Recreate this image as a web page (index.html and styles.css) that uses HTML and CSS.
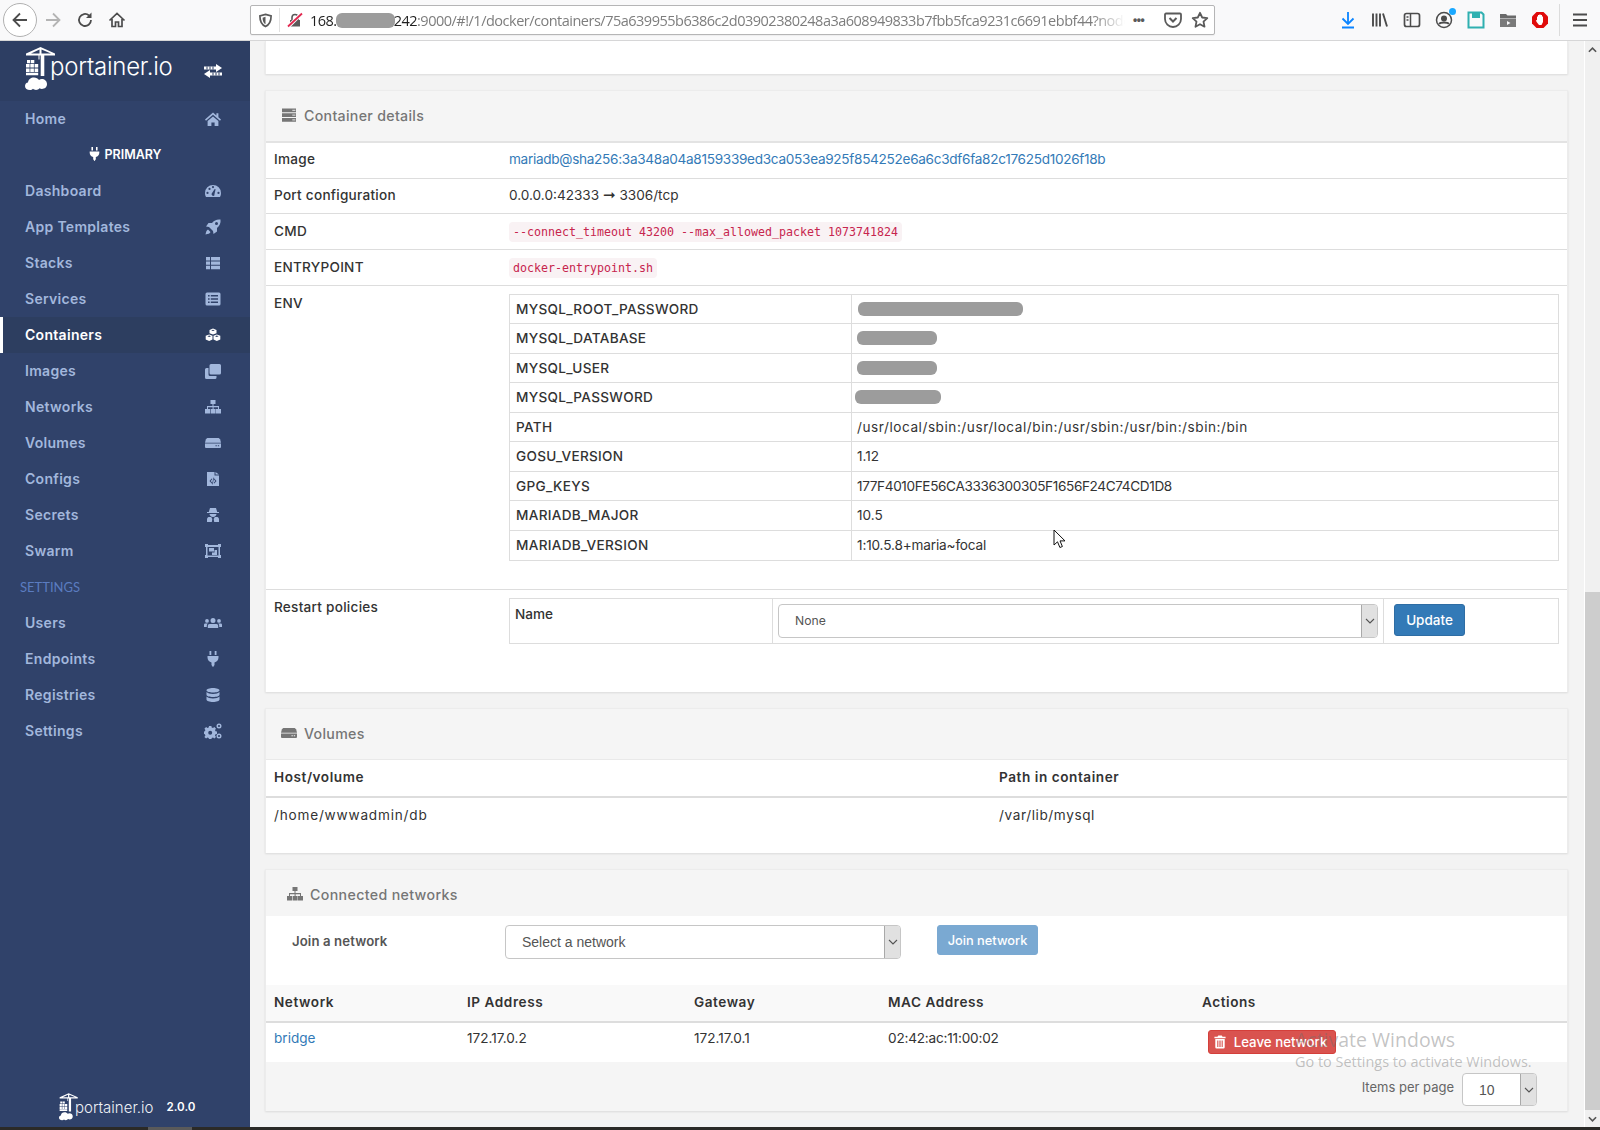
FILE: index.html
```html
<!DOCTYPE html>
<html lang="en">
<head>
<meta charset="utf-8">
<title>Container details - Portainer</title>
<link rel="stylesheet" href="styles.css">
</head>
<body>
<svg class="defs" width="0" height="0" aria-hidden="true">
  <symbol id="i-home" viewBox="0 0 16 16"><path d="M8 1.6 0 8.6l1 1.2 7-6 7 6 1-1.2-2.600-2.300V2.200h-2v2.300zM2.600 10v5h3.800v-3.400h3.200V15h3.800v-5L8 5.400z"/></symbol>
  <symbol id="i-dash" viewBox="0 0 16 16"><path d="M8 2a8 8 0 0 0-8 8c0 1.600.4 3 1.100 4h13.800c.7-1 1.100-2.400 1.100-4a8 8 0 0 0-8-8zM2.500 11a1.100 1.100 0 1 1 0-2.200 1.100 1.100 0 0 1 0 2.200zm2-4a1.100 1.100 0 1 1 0-2.200 1.100 1.100 0 0 1 0 2.200zM8 5.200A1.100 1.100 0 1 1 8 3a1.100 1.100 0 0 1 0 2.200zm1.300 7.300a1.700 1.700 0 0 1-2.600-2l3-4.600.9.300-1.200 5.300c.2.300.1.700-.1 1zM13.500 11a1.100 1.100 0 1 1 0-2.200 1.100 1.100 0 0 1 0 2.200z"/></symbol>
  <symbol id="i-rocket" viewBox="0 0 16 16"><path d="M15.500.5c-3.500-.5-6.500.8-8.500 3.500H3.500L1 7.500l3 .5 4 4 .5 3 3.500-2.500V9c2.700-2 4-5 3.500-8.500zM11.500 6a1.500 1.500 0 1 1 0-3 1.500 1.500 0 0 1 0 3zM3 10.500c-1.500.5-2 2.500-2.500 5 2.500-.5 4.500-1 5-2.500z"/></symbol>
  <symbol id="i-stacks" viewBox="0 0 16 16"><path d="M1 2h4v3.400H1zm5 0h9v3.400H6zM1 6.400h4v3.400H1zm5 0h9v3.400H6zM1 10.800h4v3.400H1zm5 0h9v3.400H6z"/></symbol>
  <symbol id="i-services" viewBox="0 0 16 16"><path fill-rule="evenodd" d="M2 1.500h12a1.500 1.500 0 0 1 1.500 1.500v10a1.500 1.500 0 0 1-1.500 1.500H2A1.500 1.500 0 0 1 .5 13V3A1.500 1.500 0 0 1 2 1.500zM3 4v1.500h1.600V4zm2.800 0v1.500H13V4zM3 7.200v1.500h1.600V7.200zm2.800 0v1.500H13V7.200zM3 10.500V12h1.600v-1.500zm2.800 0V12H13v-1.500z"/></symbol>
  <symbol id="i-cubes" viewBox="0 0 16 16"><path fill-rule="evenodd" d="M8 1.600l3.500 1.300v3.400L8 7.600 4.500 6.300V2.900zM6.200 3.400 8 4.100l1.800-.7L8 2.700zM4.200 7.500l3.300 1.300v3.800L4.200 14 .7 12.600V8.800zM2.400 9.300l1.800.7 1.800-.7-1.800-.7zM11.800 7.500l3.500 1.300v3.800L11.800 14l-3.300-1.400V8.800zM10 9.300l1.800.7 1.800-.7-1.800-.7z"/></symbol>
  <symbol id="i-images" viewBox="0 0 16 16"><path d="M6 1h8.500A1.500 1.500 0 0 1 16 2.500V10a1.500 1.500 0 0 1-1.500 1.500H6A1.500 1.500 0 0 1 4.500 10V2.500A1.500 1.500 0 0 1 6 1zM1.500 5h2v6.500A1.500 1.500 0 0 0 5 13h6.500v1.500A1.500 1.500 0 0 1 10 16H1.500A1.500 1.500 0 0 1 0 14.500v-8A1.500 1.500 0 0 1 1.500 5z"/></symbol>
  <symbol id="i-sitemap" viewBox="0 0 18 16"><path d="M6.500 1h5v4h-2v2H15v3h2v4.500h-5V10h2V8.300H9.600V10h2v4.500h-5V10h2V8.300H4V10h2v4.500H1V10h2V7h5.500V5h-2z"/></symbol>
  <symbol id="i-hdd" viewBox="0 0 16 16"><path d="M3 3h10c1 0 1.700.6 2.200 1.500L16 7.800H0l.8-3.300C1.300 3.600 2 3 3 3z"/><path fill-rule="evenodd" d="M0 8.600h16V12a1 1 0 0 1-1 1H1a1 1 0 0 1-1-1zM10.500 10.200v1.100h1.300v-1.100zm2.300 0v1.100h1.300v-1.100z"/></symbol>
  <symbol id="i-file" viewBox="0 0 12 16"><path fill-rule="evenodd" d="M0 1h7.500v3.500H12V15H0zM8.500 1 12 3.500H8.500zM4.700 7.500 2.500 10l2.200 2.500.7-.6L3.700 10l1.700-1.900zM7.300 7.500l-.7.600L8.300 10l-1.700 1.900.7.600L9.500 10zM6.500 6.500 5 13.300l.6.200 1.500-6.800z"/></symbol>
  <symbol id="i-secret" viewBox="0 0 14 16"><path d="M4 1h6l1.200 4H13v1H1V5h1.800zM3.500 7h7c0 1.500-1.500 3-3.500 3S3.500 8.500 3.500 7zM2.500 10h2.700L6.300 12l-.5 3H1v-2.500c0-1 .5-2 1.500-2.500zM8.800 10h2.700c1 .5 1.500 1.500 1.500 2.500V15H8.200l-.5-3z"/></symbol>
  <symbol id="i-swarm" viewBox="0 0 16 16"><path fill-rule="evenodd" d="M0 1h3v1h10V1h3v3h-1v8h1v3h-3v-1H3v1H0v-3h1V4H0zM2.500 4v8.500h11V4zM4 5h5v3.500H4zM7 9.500h2.500V7H12v5H7z"/></symbol>
  <symbol id="i-users" viewBox="0 0 18 16"><path d="M9 3a2.500 2.500 0 1 1 0 5 2.500 2.500 0 0 1 0-5zM3 4a1.900 1.900 0 1 1 0 3.800A1.900 1.900 0 0 1 3 4zm12 0a1.900 1.900 0 1 1 0 3.800A1.900 1.900 0 0 1 15 4zM5.500 9h7a1.700 1.700 0 0 1 1.700 1.700V13H3.800v-2.300A1.700 1.700 0 0 1 5.500 9zM1.200 8.500h2.600a2.600 2.600 0 0 0-1 2V12H0V9.700a1.200 1.200 0 0 1 1.200-1.200zM14.200 8.500h2.600A1.200 1.200 0 0 1 18 9.700V12h-2.800v-1.500a2.600 2.600 0 0 0-1-2z"/></symbol>
  <symbol id="i-plug" viewBox="0 0 12 16"><path d="M2.500 0h1.800v4H2.500zm5.200 0h1.800v4H7.700zM.5 5h11v1.500c0 2.500-1.700 4.400-4 4.900V14L6 16.200 4.500 14v-2.600c-2.300-.5-4-2.400-4-4.900z"/></symbol>
  <symbol id="i-db" viewBox="0 0 14 16"><path d="M7 1c3.500 0 6.500 1 6.500 2.300S10.500 5.600 7 5.600.5 4.600.5 3.300 3.500 1 7 1zM.5 5c1 1.300 3.600 1.900 6.500 1.900S12.500 6.300 13.500 5v2.700C13.500 9 10.500 10 7 10S.5 9 .5 7.700zM.5 9.500c1 1.300 3.600 1.900 6.500 1.900s5.500-.6 6.500-1.900v3C13.500 13.900 10.500 15 7 15S.5 13.900.5 12.500z"/></symbol>
  <symbol id="i-cogs" viewBox="0 0 18 16"><path fill-rule="evenodd" d="M5 3h2.400l.3 1.400 1.300.6L10.300 4 12 5.700l-1 1.300.5 1.300 1.500.3v2.400l-1.500.3-.5 1.300 1 1.300-1.700 1.700-1.300-1-1.300.5-.3 1.400H5l-.3-1.400-1.300-.5-1.300 1L.4 13.900l1-1.300-.5-1.300L0 11V8.600l.9-.3.5-1.300-1-1.300L2.100 4l1.300 1 1.300-.6zM6.200 7.800a2 2 0 1 0 0 4 2 2 0 0 0 0-4z"/><path fill-rule="evenodd" d="M15 .5a2.500 2.500 0 1 1 0 5 2.500 2.500 0 0 1 0-5zm0 1.400a1.100 1.100 0 1 0 0 2.200 1.100 1.100 0 0 0 0-2.200zM15 10.500a2.500 2.500 0 1 1 0 5 2.500 2.500 0 0 1 0-5zm0 1.400a1.100 1.100 0 1 0 0 2.200 1.100 1.100 0 0 0 0-2.200z"/></symbol>
  <symbol id="i-server" viewBox="0 0 16 16"><path fill-rule="evenodd" d="M1 1.500h14v3.800H1zM1 6.200h14V10H1zM1 11h14v3.800H1zM11.500 2.800v1.200h1.200V2.800zm1.800 0V4h1V2.800zM11.500 7.500v1.200h1.200V7.500zm1.800 0v1.200h1V7.500zM11.500 12.300v1.200h1.200v-1.200zm1.800 0v1.200h1v-1.200z"/></symbol>
  <symbol id="i-trash" viewBox="0 0 14 16"><path fill-rule="evenodd" d="M5 .5h4l1 1.500h3.500v1.600H.5V2H4zM1.500 4.500h11V14a1.500 1.500 0 0 1-1.500 1.500H3A1.500 1.500 0 0 1 1.500 14zM3.800 6.300v7.400h1.300V6.300zm2.500 0v7.400h1.400V6.300zm2.600 0v7.400h1.300V6.300z"/></symbol>
  <symbol id="i-logo" viewBox="0 0 32 44">
    <path d="M15.500 0 30 6.500v2H14.500V12.500h-1V8.500H1V6.500zM14.500 6.500V2.500L6 6.500zM16.500 6.500H26L16.500 2.500zM15.700 8.500h3.600V29h-3.600z"/>
    <path d="M2 13h3.300v3.300H2zm4 0h3.300v3.300H6zM1 17h3.600v3.600H1zm4.300 0h3.600v3.600H5.300zm4.300 0h3.600v3.600H9.600zM1 21.400h3.600V25H1zm4.300 0h3.600V25H5.300zm4.300 0h3.600V25H9.600zM1 25.700h12.200v2.500H1z"/>
    <path d="M5 43c-3 0-5-1.600-5-4 0-1.900 1.400-3.300 3-3.500C3.300 32.500 5.800 30.500 9 30.500c2.200 0 4 1 5 2.400.8-.5 1.700-.8 2.700-.8 2.800 0 5.300 2 5.300 5 0 3.200-2.400 4.900-5 4.900-1 0-1.800-.3-2.500-.7-.8 1-2 1.700-3.500 1.700-1.300 0-2.400-.5-3-1.200-.7.800-1.700 1.200-3 1.200z"/>
  </symbol>
  <symbol id="i-chev" viewBox="0 0 10 6"><path d="M1 1l4 4 4-4" fill="none" stroke="currentColor" stroke-width="1.100"/></symbol>
</svg>

<header class="toolbar">
  <div class="nav-group">
    <span class="back-btn"><svg class="tb-icon" viewBox="0 0 18 18"><path d="M16 9H3M9 2.500 2.500 9 9 15.500" fill="none" stroke="#4c4c4c" stroke-width="1.800"/></svg></span>
    <span class="nav-btn"><svg class="tb-icon" viewBox="0 0 18 18"><path d="M2 9h13M9 2.500 15.500 9 9 15.500" fill="none" stroke="#b4b4b4" stroke-width="1.800"/></svg></span>
    <span class="nav-btn"><svg class="tb-icon" viewBox="0 0 18 18"><path d="M15 9a6 6 0 1 1-2-4.500" fill="none" stroke="#4c4c4c" stroke-width="1.800"/><path d="M15.500 1.500v5.500H10z" fill="#4c4c4c"/></svg></span>
    <span class="nav-btn"><svg class="tb-icon" viewBox="0 0 18 18"><path d="M1.500 9.500 9 2.500l7.500 7M4 8v7.500h3.500V11h3v4.500H14V8" fill="none" stroke="#4c4c4c" stroke-width="1.700"/></svg></span>
  </div>
  <div class="urlbar">
    <svg class="shield" viewBox="0 0 16 16"><path d="M8 1.500 14 3c0 6-1.500 9.500-6 11.500C3.500 12.500 2 9 2 3z" fill="none" stroke="#5a5a5a" stroke-width="1.800"/><path d="M8 4v8c-2.300-1.300-3-3.500-3.100-7z" fill="#5a5a5a"/></svg>
    <span class="url-sep"></span>
    <svg class="lock" viewBox="0 0 16 16"><path d="M3 8h10v6.500H3z" fill="#5a5a5a"/><path d="M5 8V5.500a3 3 0 0 1 6 0V8" fill="none" stroke="#5a5a5a" stroke-width="1.600"/><path d="M1 15 15 1" stroke="#fff" stroke-width="3.500"/><path d="M1 14.500 15 1.500" stroke="#e22850" stroke-width="1.800"/></svg>
    <span class="url-text"><span class="url-host">168.</span><span class="url-blob"></span><span class="url-host">242</span>:9000/#!/1/docker/containers/75a639955b6386c2d03902380248a3a608949833b7fbb5fca9231c6691ebbf44?node</span>
    <span class="url-dots">•••</span>
    <svg class="tb-icon url-action" viewBox="0 0 18 18"><path d="M2 2.500h14a1 1 0 0 1 1 1V8a8 8 0 0 1-16 0V3.500a1 1 0 0 1 1-1z" fill="none" stroke="#5a5a5a" stroke-width="1.800"/><path d="M5.500 7 9 10.500 12.500 7" fill="none" stroke="#5a5a5a" stroke-width="2"/></svg>
    <svg class="tb-icon url-action" viewBox="0 0 18 18"><path d="m9 1.800 2.200 4.700 5.100.6-3.800 3.500 1 5.100L9 13.200l-4.500 2.500 1-5.100-3.800-3.500 5.100-.6z" fill="none" stroke="#5a5a5a" stroke-width="1.800" stroke-linejoin="round"/></svg>
  </div>
  <div class="tool-group">
    <svg class="tb-icon" viewBox="0 0 18 18"><path d="M9 1v11M3.500 7.500 9 13l5.500-5.500M3 16.500h12" fill="none" stroke="#0a84ff" stroke-width="1.800"/></svg>
    <svg class="tb-icon" viewBox="0 0 18 18"><path d="M2 2.500v13M5.500 2.500v13M9 2.500v13M12 2.500l4 13" fill="none" stroke="#4c4c4c" stroke-width="1.900"/></svg>
    <svg class="tb-icon" viewBox="0 0 18 18"><rect x="1.500" y="2.500" width="15" height="13" rx="2" fill="none" stroke="#4c4c4c" stroke-width="1.700"/><path d="M7.500 2.500v13M3.500 6h2M3.500 9h2" stroke="#4c4c4c" stroke-width="1.500"/></svg>
    <span class="acct"><svg class="tb-icon" viewBox="0 0 18 18"><circle cx="9" cy="9" r="7.500" fill="none" stroke="#4c4c4c" stroke-width="1.500"/><circle cx="9" cy="7.500" r="3" fill="#4c4c4c"/><path d="M4 13c1.500-2 8.500-2 10 0" fill="none" stroke="#4c4c4c" stroke-width="1.800"/></svg><span class="acct-dot"></span></span>
    <svg class="tb-icon" viewBox="0 0 18 18"><path d="M1.500 1.500h13l2 2v13h-15z" fill="none" stroke="#2fb0b0" stroke-width="2"/><path d="M5 1.500h8V7H5z" fill="#2fb0b0"/></svg>
    <svg class="tb-icon" viewBox="0 0 18 18"><path d="M1 3h6l1.500 1.500H17v3H1z" fill="#6a6a6a"/><path d="M1 8h16v8H1z" fill="#7a7a7a"/><path d="M8 10v4l3.500-2z" fill="#f9f9fa"/></svg>
    <svg class="tb-icon" viewBox="0 0 18 18"><path d="M5.500 1h7L17 5.500v7L12.500 17h-7L1 12.500v-7z" fill="#e00b0b"/><path d="M6 9V5.500h1V4h1.200v-.5h1.500V4H11v1.500h1V11l-1.500 3H8L6 11.500 4.800 9.500z" fill="#fff"/></svg>
    <span class="tool-sep"></span>
    <svg class="tb-icon" viewBox="0 0 18 18"><path d="M2 3.500h14M2 9h14M2 14.500h14" stroke="#4c4c4c" stroke-width="1.800"/></svg>
  </div>
</header>

<div class="app">
  <aside class="sidebar">
    <div class="brand">
      <span class="brand-logo">
        <svg class="logo-mark"><use href="#i-logo"/></svg>
        <span class="logo-word">portainer.io</span>
      </span>
      <svg class="switch-icon" viewBox="0 0 18 16"><path d="M0 3.500h12V1l6 4-6 4V6.500H0z" fill="#fff"/><path d="M18 9.500H6V7L0 11l6 4v-2.500h12z" fill="#fff"/><path d="M3 3.500v3M6 3.500v3M9 3.500v3M9 9.500v3M12 9.500v3M15 9.500v3" stroke="#2d3e63"/></svg>
    </div>
    <nav class="side-nav">
      <a class="nav-row"><span>Home</span><svg class="nav-ico"><use href="#i-home"/></svg></a>
      <div class="env-row"><svg class="env-ico"><use href="#i-plug"/></svg>PRIMARY</div>
      <a class="nav-row"><span>Dashboard</span><svg class="nav-ico"><use href="#i-dash"/></svg></a>
      <a class="nav-row"><span>App Templates</span><svg class="nav-ico"><use href="#i-rocket"/></svg></a>
      <a class="nav-row"><span>Stacks</span><svg class="nav-ico"><use href="#i-stacks"/></svg></a>
      <a class="nav-row"><span>Services</span><svg class="nav-ico"><use href="#i-services"/></svg></a>
      <a class="nav-row active"><span>Containers</span><svg class="nav-ico"><use href="#i-cubes"/></svg></a>
      <a class="nav-row"><span>Images</span><svg class="nav-ico"><use href="#i-images"/></svg></a>
      <a class="nav-row"><span>Networks</span><svg class="nav-ico"><use href="#i-sitemap"/></svg></a>
      <a class="nav-row"><span>Volumes</span><svg class="nav-ico"><use href="#i-hdd"/></svg></a>
      <a class="nav-row"><span>Configs</span><svg class="nav-ico"><use href="#i-file"/></svg></a>
      <a class="nav-row"><span>Secrets</span><svg class="nav-ico"><use href="#i-secret"/></svg></a>
      <a class="nav-row"><span>Swarm</span><svg class="nav-ico"><use href="#i-swarm"/></svg></a>
      <div class="nav-title">SETTINGS</div>
      <a class="nav-row"><span>Users</span><svg class="nav-ico"><use href="#i-users"/></svg></a>
      <a class="nav-row"><span>Endpoints</span><svg class="nav-ico"><use href="#i-plug"/></svg></a>
      <a class="nav-row"><span>Registries</span><svg class="nav-ico"><use href="#i-db"/></svg></a>
      <a class="nav-row"><span>Settings</span><svg class="nav-ico"><use href="#i-cogs"/></svg></a>
    </nav>
    <div class="side-foot">
      <svg class="foot-mark"><use href="#i-logo"/></svg>
      <span class="foot-word">portainer.io</span>
      <span class="foot-ver">2.0.0</span>
    </div>
  </aside>

  <main class="main">
    <section class="widget stub"></section>

    <section class="widget details">
      <h3 class="widget-head"><svg class="head-ico"><use href="#i-server"/></svg>Container details</h3>
      <table class="kv">
        <tr><td class="k">Image</td><td><a class="link hash">mariadb@sha256:3a348a04a8159339ed3ca053ea925f854252e6a6c3df6fa82c17625d1026f18b</a></td></tr>
        <tr><td class="k">Port configuration</td><td>0.0.0.0:42333 <span class="arrow">➞</span> 3306/tcp</td></tr>
        <tr><td class="k">CMD</td><td><code>--connect_timeout 43200 --max_allowed_packet 1073741824</code></td></tr>
        <tr><td class="k">ENTRYPOINT</td><td><code>docker-entrypoint.sh</code></td></tr>
        <tr class="env-tr"><td class="k">ENV</td><td>
          <table class="env">
            <tr><td class="ek">MYSQL_ROOT_PASSWORD</td><td><span class="blob b-root"></span></td></tr>
            <tr><td class="ek">MYSQL_DATABASE</td><td><span class="blob b-db"></span></td></tr>
            <tr><td class="ek">MYSQL_USER</td><td><span class="blob b-db"></span></td></tr>
            <tr><td class="ek">MYSQL_PASSWORD</td><td><span class="blob b-pw"></span></td></tr>
            <tr><td class="ek">PATH</td><td class="v-path">/usr/local/sbin:/usr/local/bin:/usr/sbin:/usr/bin:/sbin:/bin</td></tr>
            <tr><td class="ek">GOSU_VERSION</td><td>1.12</td></tr>
            <tr><td class="ek">GPG_KEYS</td><td class="v-hex">177F4010FE56CA3336300305F1656F24C74CD1D8</td></tr>
            <tr><td class="ek">MARIADB_MAJOR</td><td>10.5</td></tr>
            <tr><td class="ek">MARIADB_VERSION</td><td class="v-ver">1:10.5.8+maria~focal</td></tr>
          </table>
        </td></tr>
        <tr class="restart-tr"><td class="k">Restart policies</td><td>
          <table class="restart">
            <tr>
              <td class="rn">Name</td>
              <td class="rs"><div class="select sel-none"><span>None</span><span class="sel-arrow"><svg class="chev"><use href="#i-chev"/></svg></span></div></td>
              <td class="ru"><button class="btn btn-primary">Update</button></td>
            </tr>
          </table>
        </td></tr>
      </table>
    </section>

    <section class="widget vols">
      <h3 class="widget-head"><svg class="head-ico"><use href="#i-hdd"/></svg>Volumes</h3>
      <table class="vt">
        <thead><tr><th>Host/volume</th><th>Path in container</th></tr></thead>
        <tbody><tr><td class="v-host">/home/wwwadmin/db</td><td class="v-mount">/var/lib/mysql</td></tr></tbody>
      </table>
    </section>

    <section class="widget nets">
      <h3 class="widget-head net-head"><svg class="head-ico"><use href="#i-sitemap"/></svg>Connected networks</h3>
      <div class="join">
        <label class="join-label">Join a network</label>
        <div class="select sel-net"><span>Select a network</span><span class="sel-arrow"><svg class="chev"><use href="#i-chev"/></svg></span></div>
        <button class="btn btn-join">Join network</button>
      </div>
      <table class="nt">
        <thead><tr><th>Network</th><th>IP Address</th><th>Gateway</th><th>MAC Address</th><th>Actions</th></tr></thead>
        <tbody><tr><td><a class="link">bridge</a></td><td>172.17.0.2</td><td>172.17.0.1</td><td class="v-mac">02:42:ac:11:00:02</td><td><button class="btn btn-danger"><svg class="trash"><use href="#i-trash"/></svg>Leave network</button></td></tr></tbody>
      </table>
      <div class="pager">
        <span class="pager-label">Items per page</span>
        <div class="select sel-page"><span>10</span><span class="sel-arrow"><svg class="chev"><use href="#i-chev"/></svg></span></div>
      </div>
    </section>

    <svg class="cursor" viewBox="0 0 13 21"><path d="M1 1v15l3.500-3.200 2.400 5.700 2.500-1-2.400-5.600H12z" fill="#fff" stroke="#111" stroke-width="1"/></svg>
    <div class="watermark">
      <div class="wm-title">Activate Windows</div>
      <div class="wm-sub">Go to Settings to activate Windows.</div>
    </div>
  </main>

  <div class="scrollbar">
    <span class="sb-btn"><svg class="sb-chev" viewBox="0 0 10 6"><path d="M1 5l4-4 4 4" fill="none" stroke="#555" stroke-width="1.800"/></svg></span>
    <span class="sb-track"></span>
    <span class="sb-thumb"></span>
    <span class="sb-btn"><svg class="sb-chev" viewBox="0 0 10 6"><path d="M1 1l4 4 4-4" fill="none" stroke="#555" stroke-width="1.800"/></svg></span>
  </div>
</div>

<footer class="taskbar"><span class="tb-a"></span><span class="tb-b"></span><span class="tb-c"></span></footer>
</body>
</html>
```
FILE: styles.css
```css
* { box-sizing: border-box; }
html, body { margin: 0; height: 1130px; overflow: hidden; }
body { font-family: Inter, "Noto Sans", sans-serif; font-size: 13.6px; color: #333; display: flex; flex-direction: column; background: #f3f3f3; }
.defs { position: absolute; }
svg { display: block; flex: none; }
button { font-family: inherit; }

/* Browser chrome */
.toolbar { height: 41px; flex: none; display: flex; align-items: center; background: #f9f9fa; border-bottom: 1px solid #d6d6d7; padding-left: 3px; }
.nav-group { display: flex; align-items: center; width: 247px; }
.back-btn { width: 34px; height: 34px; border: 1px solid #b1b1b1; border-radius: 50%; background: #fff; display: flex; align-items: center; justify-content: center; }
.nav-btn { width: 32px; display: flex; justify-content: center; }
.tb-icon { width: 18px; height: 18px; }
.urlbar { width: 965px; height: 30px; background: #fff; border: 1px solid #b5b5b6; border-radius: 2px; display: flex; align-items: center; padding-left: 7px; box-shadow: 0 1px 1px rgba(0,0,0,.05); }
.shield { width: 15px; height: 15px; }
.url-sep { width: 1px; height: 24px; background: #e2e2e2; margin: 0 7px 0 6px; }
.lock { width: 16px; height: 16px; }
.url-text { font-family: "Open Sans", sans-serif; font-size: 14.5px; letter-spacing: -.5px; color: #7d7d7d; margin-left: 7px; width: 815px; white-space: nowrap; overflow: hidden; display: flex; align-items: center; -webkit-mask-image: linear-gradient(90deg, #000 96%, transparent); mask-image: linear-gradient(90deg, #000 96%, transparent); }
.url-host { color: #1f1f1f; }
.url-blob { width: 59px; height: 15px; background: #9c9c9c; border-radius: 6px; flex: none; margin: 0 -1px; }
.url-dots { font-size: 12px; font-weight: 700; color: #5a5a5a; width: 22px; margin-left: 8px; font-family: "Liberation Sans", sans-serif; white-space: nowrap; letter-spacing: -.5px; }
.url-action { margin-left: 9px; }
.tool-group { display: flex; align-items: center; gap: 14px; margin-left: 124px; }
.acct { position: relative; }
.acct-dot { position: absolute; right: -3px; top: -3px; width: 7px; height: 7px; border-radius: 50%; background: #19a8ff; }
.tool-sep { width: 1px; height: 32px; background: #dcdcdc; margin: 0 -3px 0 -4px; }

/* App shell */
.app { flex: 1; min-height: 0; display: flex; }
.sidebar { width: 250px; flex: none; background: #30426a; display: flex; flex-direction: column; }
.brand { height: 60px; background: #2d3e63; display: flex; align-items: flex-start; padding: 6px 0 0 25px; }
.brand-logo { display: flex; width: 179px; }
.logo-mark { width: 32px; height: 44px; fill: #fff; }
.logo-word { font-size: 24px; font-weight: 300; color: #fff; margin: 5px 0 0 -7px; letter-spacing: -.25px; line-height: 30px; }
.switch-icon { width: 18px; height: 16px; margin-top: 16px; }
.nav-row { height: 36px; display: flex; align-items: center; justify-content: space-between; padding: 0 28px 1px 25px; color: #a2b7dc; font-size: 14px; font-weight: 600; letter-spacing: .3px; }
.nav-row.active { background: #2d3e60; color: #fff; border-left: 3px solid #fff; padding-left: 22px; }
.nav-ico { width: 18px; height: 16px; fill: currentColor; }
.env-row { height: 36px; display: flex; align-items: center; justify-content: center; color: #fff; font-size: 12.5px; font-weight: 600; padding: 0 0 2px 1px; }
.env-ico { width: 11px; height: 14px; fill: #fff; margin-right: 4px; }
.nav-title { height: 36px; display: flex; align-items: center; padding: 0 0 1px 20px; font-family: Lato, sans-serif; font-size: 13px; color: #5b7cc0; }
.side-foot { margin-top: auto; display: flex; align-items: center; padding: 0 0 4px 59px; height: 36px; }
.foot-mark { width: 20px; height: 28px; fill: #fff; }
.foot-word { font-size: 15px; font-weight: 300; color: #eef1f6; margin-left: -4px; }
.foot-ver { font-size: 11.6px; font-weight: 600; color: #fff; margin-left: 13px; }

/* Main column */
.main { flex: none; width: 1334px; position: relative; overflow: hidden; padding: 0 16px 0 15px; background: #f3f3f3; }
.widget { background: #fff; border: 1px solid #ececec; border-width: 1px 1px 0; box-shadow: 0 1px 2px rgba(0,0,0,.1); margin-bottom: 16px; }
.stub { height: 33px; border-top: 0; }
.widget-head { margin: 0; height: 52px; background: #f5f5f5; border-bottom: 2px solid #e3e3e3; display: flex; align-items: center; padding: 0 0 2px 15px; font-size: 14.2px; font-weight: 500; color: #767676; letter-spacing: .3px; }
.head-ico { width: 16px; height: 16px; fill: #767676; margin-right: 7px; }
.details { height: 602px; }
.vols { height: 145px; }
.vols .widget-head { height: 51px; border-bottom: 1px solid #e9e9e9; }
.nets { height: 242px; background: #f5f5f5; }
.net-head { height: 46px; border-bottom: 0; padding: 2px 0 0 20px; letter-spacing: .35px; }
.net-head .head-ico { width: 18px; margin-right: 6px; }

table { border-collapse: collapse; }
.kv { width: 100%; table-layout: fixed; }
.kv > tbody > tr > td { padding: 7px 8px; border-bottom: 1px solid #ddd; vertical-align: top; height: 36px; line-height: 20px; }
.kv > tbody > tr:nth-child(-n+2) > td { height: 35px; padding-top: 6px; }
.kv .k { width: 235px; font-weight: 500; color: #333; letter-spacing: .25px; }
.kv .restart-tr > td { border-bottom: 0; }
.kv > tbody > .env-tr > td:last-child { padding: 8px 8px 28px; }
.kv > tbody > .restart-tr > td { height: 100px; padding-top: 7px; }
.link { color: #337ab7; }
.hash { letter-spacing: -.3px; }
.arrow { font-family: "DejaVu Sans", sans-serif; font-size: 15px; font-weight: 700; line-height: 14px; }
code { font-family: "DejaVu Sans Mono", monospace; font-size: 11.630px; color: #c7254e; background: #f9f2f4; border-radius: 4px; padding: 3px 4px; }

.env { width: 100%; table-layout: fixed; border: 1px solid #ddd; }
.env td { border: 1px solid #ddd; height: 29.500px; padding: 0 5px; line-height: 18px; }
.env tr:last-child td { height: 30.500px; }
.env .ek { width: 342px; font-weight: 500; letter-spacing: .3px; padding-left: 6px; }
.env .v-path { letter-spacing: .55px; }
.env .v-hex { letter-spacing: -.37px; }
.env .v-ver { letter-spacing: -.15px; }
.blob { display: block; height: 14px; background: #9c9c9c; border-radius: 6px; }
.b-root { width: 165px; margin-left: 1px; }
.b-db { width: 80px; }
.b-pw { width: 86px; margin-left: -2px; }

.restart { width: 100%; table-layout: fixed; border: 1px solid #ddd; margin-top: 1px; }
.restart td { border: 1px solid #ddd; height: 45px; padding: 5px; vertical-align: top; }
.restart .rn { width: 263px; font-weight: 500; padding-top: 5px; }
.restart .ru { width: 175px; padding-left: 10px; }

.select { display: flex; align-items: center; justify-content: space-between; background: #fff; border: 1px solid #c6c6c6; border-radius: 4px; overflow: hidden; color: #555; }
.select > span:first-child { padding-left: 16px; }
.sel-arrow { width: 16px; align-self: stretch; flex: none; display: flex; align-items: center; justify-content: center; background: #e1e1e1; border-left: 1px solid #a9a9a9; color: #555; }
.chev { width: 10px; height: 6px; }
.sel-none { height: 34px; font-size: 12.200px; }
.sel-net { width: 396px; height: 34px; font-family: "Liberation Sans", sans-serif; font-size: 14px; }
.sel-page { width: 75px; height: 33px; font-family: "Liberation Sans", sans-serif; font-size: 14px; }

.btn { border: 1px solid transparent; border-radius: 3px; color: #fff; font-weight: 500; display: inline-flex; align-items: center; justify-content: center; padding: 0; }
.btn-primary { width: 71px; height: 32px; background: #337ab7; border-color: #2e6da4; font-size: 13.500px; }
.btn-join { width: 101px; height: 30px; background: #7aa9d2; border-color: #7aa9d2; font-size: 12.800px; margin-left: 36px; }
.btn-danger { width: 128px; height: 24px; background: #d9534f; border-color: #d43f3a; font-size: 13.300px; margin: 1px 0 0 6px; padding-right: 3px; }
.trash { width: 12px; height: 14px; fill: #fff; margin-right: 8px; }

.vt, .nt { width: 100%; table-layout: fixed; background: #fff; }
.vt th, .nt th { text-align: left; font-weight: 600; padding: 0 8px 2px; border-bottom: 2px solid #ddd; letter-spacing: .55px; }
.vt th { height: 37px; background: #fff; }
.vt td { height: 36px; padding: 0 8px 2px; }
.vt th:first-child { width: 725px; }
.v-host { letter-spacing: .8px; }
.v-mount { letter-spacing: .6px; }
.join { height: 69px; background: #fff; display: flex; align-items: flex-start; padding-top: 9px; }
.join-label { width: 239px; padding-left: 26px; font-weight: 600; color: #555; font-size: 13.200px; line-height: 33px; letter-spacing: .1px; }
.nt th { height: 37px; background: #f9f9f9; padding-bottom: 3px; }
.nt td { height: 40px; padding: 6px 8px 0; vertical-align: top; line-height: 19px; }
.nt th:nth-child(1) { width: 193px; }
.nt th:nth-child(2) { width: 227px; }
.nt th:nth-child(3) { width: 194px; }
.nt th:nth-child(4) { width: 314px; }
.v-mac { letter-spacing: -.2px; }
.pager { display: flex; justify-content: flex-end; align-items: center; padding: 11px 30px 0 0; }
.pager-label { font-size: 13px; color: #666; margin-right: 8px; padding-bottom: 5px; }

/* Overlays */
.cursor { position: absolute; left: 803px; top: 488px; width: 13px; height: 21px; }
.watermark { position: absolute; left: 1045px; top: 985px; font-family: "Open Sans", sans-serif; color: rgba(110,110,110,.42); }
.wm-title { font-size: 19.500px; line-height: 27px; }
.wm-sub { font-size: 14.450px; line-height: 20px; margin-top: -1px; }

/* Scrollbar */
.scrollbar { width: 16px; flex: none; display: flex; flex-direction: column; background: #f0f0f0; border-left: 1px solid #fff; }
.sb-btn { height: 17px; flex: none; display: flex; align-items: center; justify-content: center; }
.sb-chev { width: 9px; height: 6px; }
.sb-track { height: 534px; flex: none; }
.sb-thumb { flex: 1; background: #cdcdcd; }

.taskbar { height: 3px; flex: none; display: flex; background: #2b2a27; }
.tb-a { width: 148px; }
.tb-b { width: 44px; background: #5a5a5a; }
.tb-c { flex: 1; }
```
